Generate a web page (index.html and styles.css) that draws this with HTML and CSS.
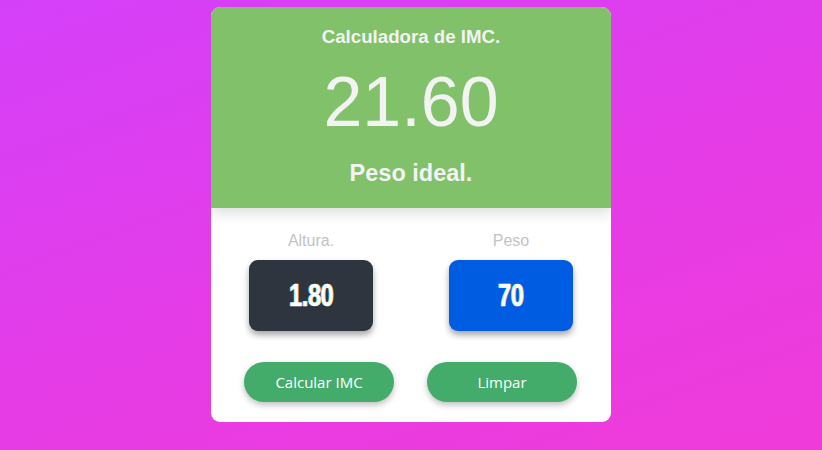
FILE: index.html
```html
<!DOCTYPE html>
<html>
<head>
<meta charset="utf-8">
<link rel="stylesheet" href="styles.css">
</head>
<body>
<div class="card">
  <div class="header">
    <h1 class="title">Calculadora de IMC.</h1>
    <div class="result">21.60</div>
    <div class="status">Peso ideal.</div>
  </div>
  <div class="body">
    <div class="fields">
      <div class="field">
        <div class="label">Altura.</div>
        <div class="box dark"><span>1.80</span></div>
      </div>
      <div class="field">
        <div class="label">Peso</div>
        <div class="box blue"><span>70</span></div>
      </div>
    </div>
    <div class="actions">
      <button class="btn">Calcular IMC</button>
      <button class="btn">Limpar</button>
    </div>
  </div>
</div>
</body>
</html>
```
FILE: styles.css
```css
html, body {
  margin: 0;
  height: 100%;
}
body {
  background: linear-gradient(160deg, #d440f9 0%, #e53ce6 55%, #f03bd9 100%);
  font-family: "Liberation Sans", Arial, sans-serif;
  padding-top: 7px;
  box-sizing: border-box;
}
.card {
  width: 400px;
  margin: 0 auto;
  background: #fff;
  border-radius: 9px;
  overflow: hidden;
}
.header {
  background: #81c16a;
  height: 201px;
  box-sizing: border-box;
  padding-top: 18px;
  text-align: center;
  color: #f3f3f3;
  box-shadow: 0 6px 12px rgba(0,0,0,0.12);
  position: relative;
  z-index: 1;
}
.title {
  margin: 0;
  font-size: 18.7px;
  font-weight: bold;
  line-height: 24px;
}
.result {
  font-size: 70px;
  line-height: 80px;
  margin-top: 13px;
}
.status {
  font-size: 23.5px;
  font-weight: bold;
  line-height: 28px;
  margin-top: 17px;
}
.body {
  padding-top: 23px;
  padding-bottom: 20px;
}
.fields {
  display: flex;
}
.field {
  flex: 1;
  display: flex;
  flex-direction: column;
  align-items: center;
}
.label {
  color: #c3c3c3;
  font-size: 16px;
  line-height: 20px;
}
.box {
  margin-top: 9px;
  width: 124px;
  height: 71px;
  border-radius: 9px;
  display: flex;
  align-items: center;
  justify-content: center;
  box-shadow: 0 4px 6px rgba(0,0,0,0.35);
}
.box span {
  color: #fff;
  font-family: "Liberation Sans Narrow", "Liberation Sans", sans-serif;
  font-weight: bold;
  font-size: 31px;
  display: inline-block;
  transform: scaleX(0.76);
  letter-spacing: -0.5px;
  -webkit-text-stroke: 0.6px #fff;
  text-shadow: -1px 0 0 rgba(0,200,255,0.8), 1px 0 0 rgba(255,170,0,0.8);
}
.dark { background: #2f353e; }
.blue { background: #005ce0; }
.actions {
  display: flex;
  gap: 33px;
  padding-left: 33px;
  margin-top: 31px;
}
.btn {
  width: 150px;
  height: 40px;
  border: none;
  border-radius: 20px;
  background: #43ac6a;
  color: #fff;
  font-family: "Open Sans", "Noto Sans", sans-serif;
  font-size: 15px;
  box-shadow: 0 3px 6px rgba(0,0,0,0.25);
  padding: 0;
}
```
